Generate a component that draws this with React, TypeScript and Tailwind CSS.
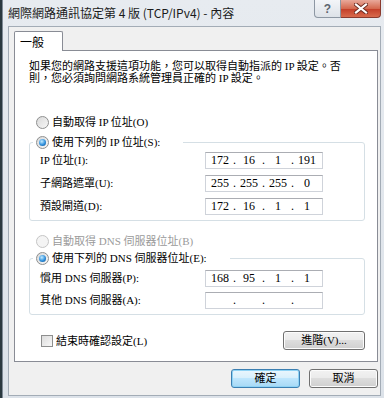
import React from 'react';

const body = "font-['Liberation_Serif','Noto_Sans_CJK_TC',serif] text-[11px] text-black";

const Radio: React.FC<{ checked?: boolean; disabled?: boolean }> = ({ checked, disabled }) => (
  <span
    className={`inline-flex w-[13px] h-[13px] shrink-0 items-center justify-center rounded-full border ${
      disabled
        ? 'border-[#c5c5c5] bg-[#f4f4f4]'
        : 'border-[#8e8f8f] bg-[linear-gradient(135deg,#d9d9d9,#f7f7f7)]'
    }`}
  >
    {checked && (
      <span className="w-[7px] h-[7px] rounded-full bg-[radial-gradient(circle_at_40%_35%,#c4ecff,#2f8fdc_55%,#0b4a86)]" />
    )}
  </span>
);

const RadioRow: React.FC<{ label: string; checked?: boolean; disabled?: boolean }> = ({
  label,
  checked,
  disabled,
}) => (
  <div className="flex items-center h-[16px] gap-[3px]">
    <Radio checked={checked} disabled={disabled} />
    <span className={`leading-[16px] ${disabled ? 'text-[#9a9a9a]' : ''}`}>{label}</span>
  </div>
);

const IpBox: React.FC<{ parts: string[] }> = ({ parts }) => (
  <div className="flex items-center w-[118px] h-[17px] border border-[#cfd3da] border-t-[#abadb3] bg-white px-[1px] text-[12px]">
    {parts.map((p, i) => (
      <React.Fragment key={i}>
        <span className="w-[26px] text-center leading-[15px]">{p}</span>
        {i < 3 && <span className="w-[3px] text-center leading-[15px]">.</span>}
      </React.Fragment>
    ))}
  </div>
);

const FieldRow: React.FC<{ label: string; parts: string[] }> = ({ label, parts }) => (
  <div className="flex items-center h-[17px]">
    <span className="w-[165px] leading-[17px]">{label}</span>
    <IpBox parts={parts} />
  </div>
);

const WinButton: React.FC<{ children: React.ReactNode; w: string; primary?: boolean }> = ({
  children,
  w,
  primary,
}) => (
  <button
    className={`${w} h-[19px] rounded-[3px] border text-[11px] leading-[15px] ${
      primary
        ? 'border-[#3c7fb1] shadow-[inset_0_0_0_1px_#8fd3f5] bg-[linear-gradient(#eaf6fd_0%,#d9f0fc_45%,#bee6fd_50%,#a7d9f5_100%)]'
        : 'border-[#707070] shadow-[inset_0_0_0_1px_#fcfcfc] bg-[linear-gradient(#f2f2f2_0%,#ebebeb_45%,#dddddd_50%,#cfcfcf_100%)]'
    }`}
  >
    {children}
  </button>
);

const App: React.FC = () => {
  return (
    <div className={`w-[384px] h-[398px] flex bg-[#2b3940] ${body}`}>
      <div className="ml-[2px] flex-1 flex flex-col bg-[linear-gradient(#e7ebf0,#dce2e9)] border-l border-[#7f8a96]">
        {/* title bar */}
        <div className="h-[26px] flex items-start justify-between shrink-0">
          <span className="mt-[4px] ml-[5px] text-[12px] leading-[18px] font-['Noto_Sans_CJK_TC','Liberation_Sans',sans-serif] text-[#1b1b1b]">
            網際網路通訊協定第 4 版 (TCP/IPv4) - 內容
          </span>
          <div className="flex mr-[3px]">
            <div className="w-[27px] h-[18px] flex items-center justify-center rounded-bl-[4px] border border-t-0 border-[#8d97a3] bg-[linear-gradient(#f3f5f8,#dde2e8)] text-[12px] font-bold text-[#5d6670] font-['Liberation_Sans',sans-serif]">
              ?
            </div>
            <div className="w-[40px] h-[18px] flex items-center justify-center rounded-br-[4px] border border-l-0 border-t-0 border-[#8a3a2e] bg-[linear-gradient(#e9a99b,#d4694f_50%,#c4402a_55%,#d86a4d)]">
              <svg width="14" height="11" viewBox="0 0 14 11">
                <path d="M2 1.5 L12 9.5 M12 1.5 L2 9.5" stroke="#6b2a20" strokeWidth="4" strokeLinecap="square" />
                <path d="M2 1.5 L12 9.5 M12 1.5 L2 9.5" stroke="#ffffff" strokeWidth="2.2" strokeLinecap="square" />
              </svg>
            </div>
          </div>
        </div>

        {/* client area */}
        <div className="flex-1 ml-[5px] mr-[3px] mb-[2px] bg-[#f0f0f0] border border-[#a3acb6] pl-[5px] pt-[4px]">
          <div className="w-[49px] h-[20px] relative z-10 -mb-[1px] bg-white border border-b-0 border-[#898c95] rounded-t-[2px] pl-[5px] text-[12px] leading-[20px] font-['Noto_Sans_CJK_TC',sans-serif]">
            一般
          </div>
          <div className="w-[364px] bg-white border border-[#898c95] pl-[14px] pr-[12px] pt-[9px] pb-[11px]">
            <p className="leading-[12px]">
              如果您的網路支援這項功能，您可以取得自動指派的 IP 設定。否
              <br />
              則，您必須詢問網路系統管理員正確的 IP 設定。
            </p>

            <div className="mt-[30px] ml-[7px]">
              <RadioRow label="自動取得 IP 位址(O)" />
            </div>

            <fieldset className="mt-[4px] w-[336px] border border-[#d5dfe5] rounded-[3px] pl-[10px] pb-[5px]">
              <legend className="ml-[-7px] pl-[3px] pr-[23px]">
                <RadioRow label="使用下列的 IP 位址(S):" checked />
              </legend>
              <div className="pt-[2px] flex flex-col gap-[6px]">
                <FieldRow label="IP 位址(I):" parts={['172', '16', '1', '191']} />
                <FieldRow label="子網路遮罩(U):" parts={['255', '255', '255', '0']} />
                <FieldRow label="預設閘道(D):" parts={['172', '16', '1', '1']} />
              </div>
            </fieldset>

            <div className="mt-[12px] ml-[7px]">
              <RadioRow label="自動取得 DNS 伺服器位址(B)" disabled />
            </div>

            <fieldset className="mt-[1px] w-[336px] border border-[#d5dfe5] rounded-[3px] pl-[10px] pb-[5px]">
              <legend className="ml-[-7px] pl-[3px] pr-[23px]">
                <RadioRow label="使用下列的 DNS 伺服器位址(E):" checked />
              </legend>
              <div className="pt-[4px] flex flex-col gap-[5px]">
                <FieldRow label="慣用 DNS 伺服器(P):" parts={['168', '95', '1', '1']} />
                <FieldRow label="其他 DNS 伺服器(A):" parts={['', '', '', '']} />
              </div>
            </fieldset>

            <div className="mt-[16px] w-[336px] flex items-center justify-between pl-[12px]">
              <div className="flex items-center gap-[3px]">
                <span className="w-[12px] h-[12px] border border-[#8e8f8f] bg-[linear-gradient(135deg,#dcdcdc,#f8f8f8)]" />
                <span className="leading-[16px]">結束時確認設定(L)</span>
              </div>
              <WinButton w="w-[82px]">進階(V)...</WinButton>
            </div>
          </div>

          <div className="w-[364px] mt-[7px] flex justify-end gap-[9px]">
            <WinButton w="w-[69px]" primary>
              確定
            </WinButton>
            <WinButton w="w-[69px]">取消</WinButton>
          </div>
        </div>
      </div>
    </div>
  );
};

export default App;
